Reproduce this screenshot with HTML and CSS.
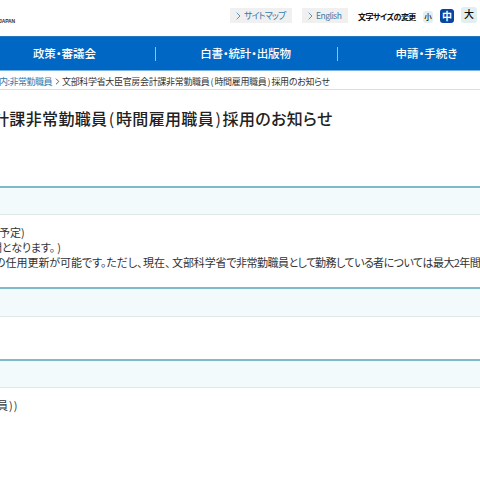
FILE: index.html
```
<!DOCTYPE html>
<html lang="ja">
<head>
<meta charset="utf-8">
<title>文部科学省</title>
<link rel="stylesheet" href="styles.css">
</head>
<body>
<header class="header">
  <div class="org">JAPAN</div>
  <a class="tool sitemap"><svg class="chev" viewBox="0 0 5 8"><path d="M.7 .7 4 4 .7 7.3"/></svg><span>サイトマップ</span></a>
  <a class="tool english"><svg class="chev" viewBox="0 0 5 8"><path d="M.7 .7 4 4 .7 7.3"/></svg><span>English</span></a>
  <span class="size-label">文字サイズの変更</span>
  <span class="size small">小</span>
  <span class="size medium">中</span>
  <span class="size large">大</span>
</header>
<nav class="nav">
  <a>政策・審議会</a>
  <a class="wide">白書・統計・出版物</a>
  <a>申請・手続き</a>
</nav>
<div class="crumbs">
  <a class="crumb-link">内:非常勤職員</a>
  <svg class="chev dark" viewBox="0 0 5 8"><path d="M.7 .7 4 4 .7 7.3"/></svg>
  <span class="crumb-here">文部科学省大臣官房会計課非常勤職員<span class="crumb-paren">(</span>時間雇用職員<span class="crumb-paren">)</span>採用のお知らせ</span>
</div>
<main>
  <h1>計課非常勤職員<span class="paren">(</span>時間雇用職員<span class="paren">)</span>採用のお知らせ</h1>
  <h2 class="first"></h2>
  <div class="text">
    <p class="l1">予定)</p>
    <p class="l2">間となります。<span class="end">)</span></p>
    <p class="l3"><span class="a">の任用更新が可能です。ただし、</span><span class="b">現在、</span><span class="c">文部科学省で</span><span class="d">非常勤職員として</span><span class="e">勤務している</span><span class="f">者については</span><span class="g">最大2年間</span></p>
  </div>
  <h2 class="second"></h2>
  <h2 class="third"></h2>
  <p class="last">員))</p>
</main>
</body>
</html>
```
FILE: styles.css
```
* { box-sizing: border-box; }
html, body { margin: 0; overflow: hidden; }
body {
  width: 480px;
  height: 480px;
  background: #fff;
  color: #333;
  font-family: "Noto Sans CJK JP", sans-serif;
  font-feature-settings: "palt";
  white-space: nowrap;
}
p, h1, h2 { margin: 0; }
.header { display: flex; height: 36px; align-items: flex-start; }
.org {
  width: 231px;
  margin-left: -1px;
  padding-top: 18px;
  font: bold 5px/6px "Liberation Sans", sans-serif;
  letter-spacing: -.1px;
}
.tool {
  display: flex;
  align-items: center;
  height: 15px;
  margin-top: 8px;
  padding-left: 6px;
  background: #f0f0f0;
  color: #3a7aa8;
  font-size: 9px;
  line-height: 15px;
}
.chev { width: 5px; height: 8px; margin-right: 3px; fill: none; stroke: #5e93b8; flex: none; }
.sitemap { width: 62px; letter-spacing: -.9px; }
.english { width: 46px; margin-left: 10px; font-size: 8.5px; letter-spacing: -.5px; }
.size-label {
  width: 65px;
  margin: 9px 0 0 10px;
  color: #111;
  font-size: 8px;
  font-weight: 700;
  line-height: 15px;
  letter-spacing: -.55px;
}
.size {
  display: flex;
  align-items: center;
  justify-content: center;
  border-radius: 3px;
  background: #e2eff1;
  color: #111;
  font-weight: 500;
}
.small { width: 10px; height: 12px; margin-top: 11px; font-size: 7.5px; line-height: 10px; padding-bottom: 1px; }
.medium { width: 14px; height: 14px; margin: 9px 0 0 7px; background: #0b44a0; color: #fff; font-size: 10px; font-weight: 700; line-height: 12px; }
.large { width: 16px; height: 16px; margin: 7px 0 0 7px; font-size: 10px; line-height: 12px; padding-bottom: 3px; }
.nav {
  display: grid;
  grid-template-columns: repeat(3, 182px);
  width: 546px;
  height: 35px;
  margin-left: -26px;
  align-items: center;
  background: #0068c4;
  border-top: 1px solid #2478bf;
  border-bottom: 1px solid #7ab6e3;
}
.nav a {
  height: 14px;
  border-right: 1px solid #8fc0ee;
  color: #fff;
  font-size: 11.5px;
  font-weight: 500;
  line-height: 12px;
  text-align: center;
}
.nav a:last-child { padding-right: 4px; }
.nav .wide { padding-right: 2px; letter-spacing: -.15px; }
.crumbs {
  display: flex;
  align-items: center;
  height: 19px;
  padding-top: 2px;
  border-bottom: 1px solid #ddd;
  font-size: 9px;
}
.crumb-link { width: 56px; margin-left: -1px; color: #2b7ab0; letter-spacing: -.5px; }
.dark { stroke: #444; height: 7px; margin-right: 2px; }
.crumb-here { letter-spacing: -.33px; }
.crumb-paren { display: inline-block; width: 5px; text-align: center; }
h1 {
  height: 96px;
  padding-top: 16px;
  margin-left: -7px;
  color: #222;
  font-size: 16px;
  font-weight: 500;
  line-height: 24px;
  letter-spacing: .35px;
}
.paren { display: inline-block; width: 8.5px; font-weight: 400; text-align: center; }
h2 { height: 29px; background: #f3fafc; border-top: 2px solid #7dbbcb; border-bottom: 1px solid #dfe7e9; }
.text { height: 72px; padding-top: 10px; font-size: 11px; line-height: 15px; }
.second { height: 30px; }
.third { margin-top: 42px; }
.l1 { margin-left: -1px; }
.l2 { margin-left: -9px; letter-spacing: -.1px; }
.end { margin-left: 2px; }
.l3 { margin-left: -5px; }
.l3 span { display: inline-block; }
.a { width: 148px; letter-spacing: -.05px; }
.b { width: 29px; }
.c { width: 64px; letter-spacing: -.1px; }
.d { width: 79px; letter-spacing: -.5px; }
.e { width: 58px; letter-spacing: -.5px; }
.f { width: 60px; letter-spacing: -.5px; }
.g { letter-spacing: -.6px; }
.last { padding-top: 9px; margin-left: -3px; font-size: 11px; line-height: 16px; letter-spacing: 1px; }
```
